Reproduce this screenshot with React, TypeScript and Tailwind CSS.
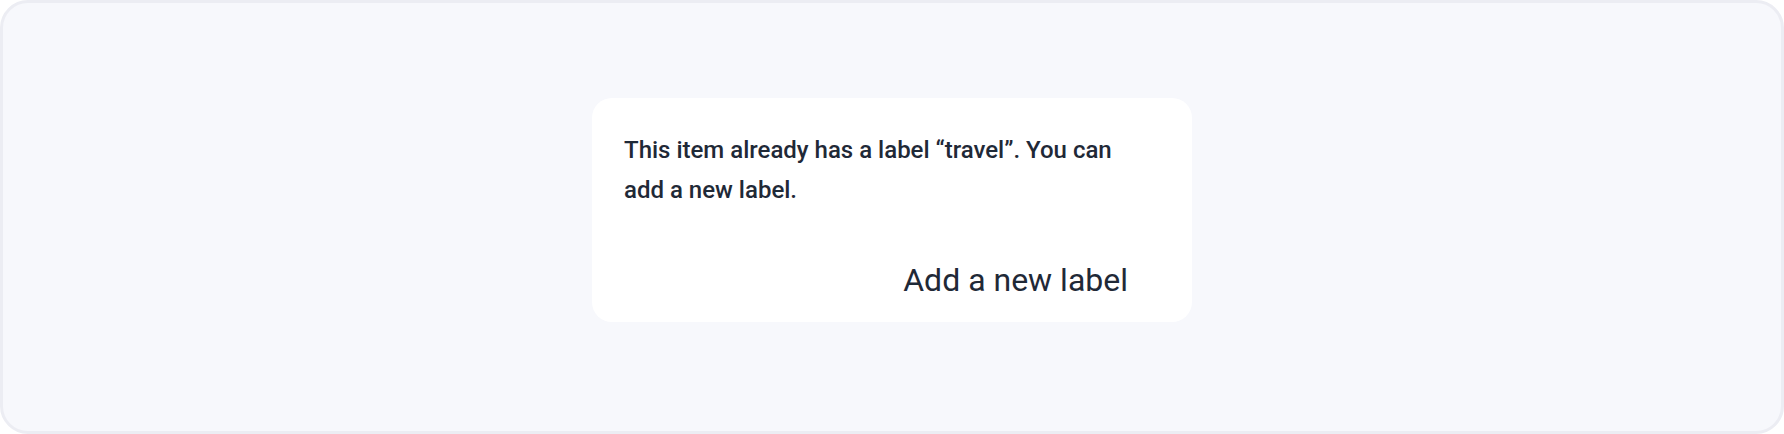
import React from 'react'

export default function App() {
  return (
    <div className="w-[1784px] h-[434px] bg-white" style={{ fontFamily: 'Roboto, "Noto Sans", sans-serif' }}>
      <div className="w-full h-full rounded-[28px] border-[3px] border-[#ecedf3] bg-[#f7f8fc] flex items-start justify-center pt-[95px]">
        <div className="w-[600px] h-[224px] bg-white rounded-[20px] px-8 pt-8 flex flex-col">
          <p className="text-[24px] leading-[40px] font-medium text-[#1f2937] pr-4">
            This item already has a label “travel”. You can add a new label.
          </p>
          <div className="flex justify-end mt-[46px]">
            <button className="h-[48px] px-8 text-[32px] leading-[48px] text-[#1f2937] bg-transparent">
              Add a new label
            </button>
          </div>
        </div>
      </div>
    </div>
  )
}
